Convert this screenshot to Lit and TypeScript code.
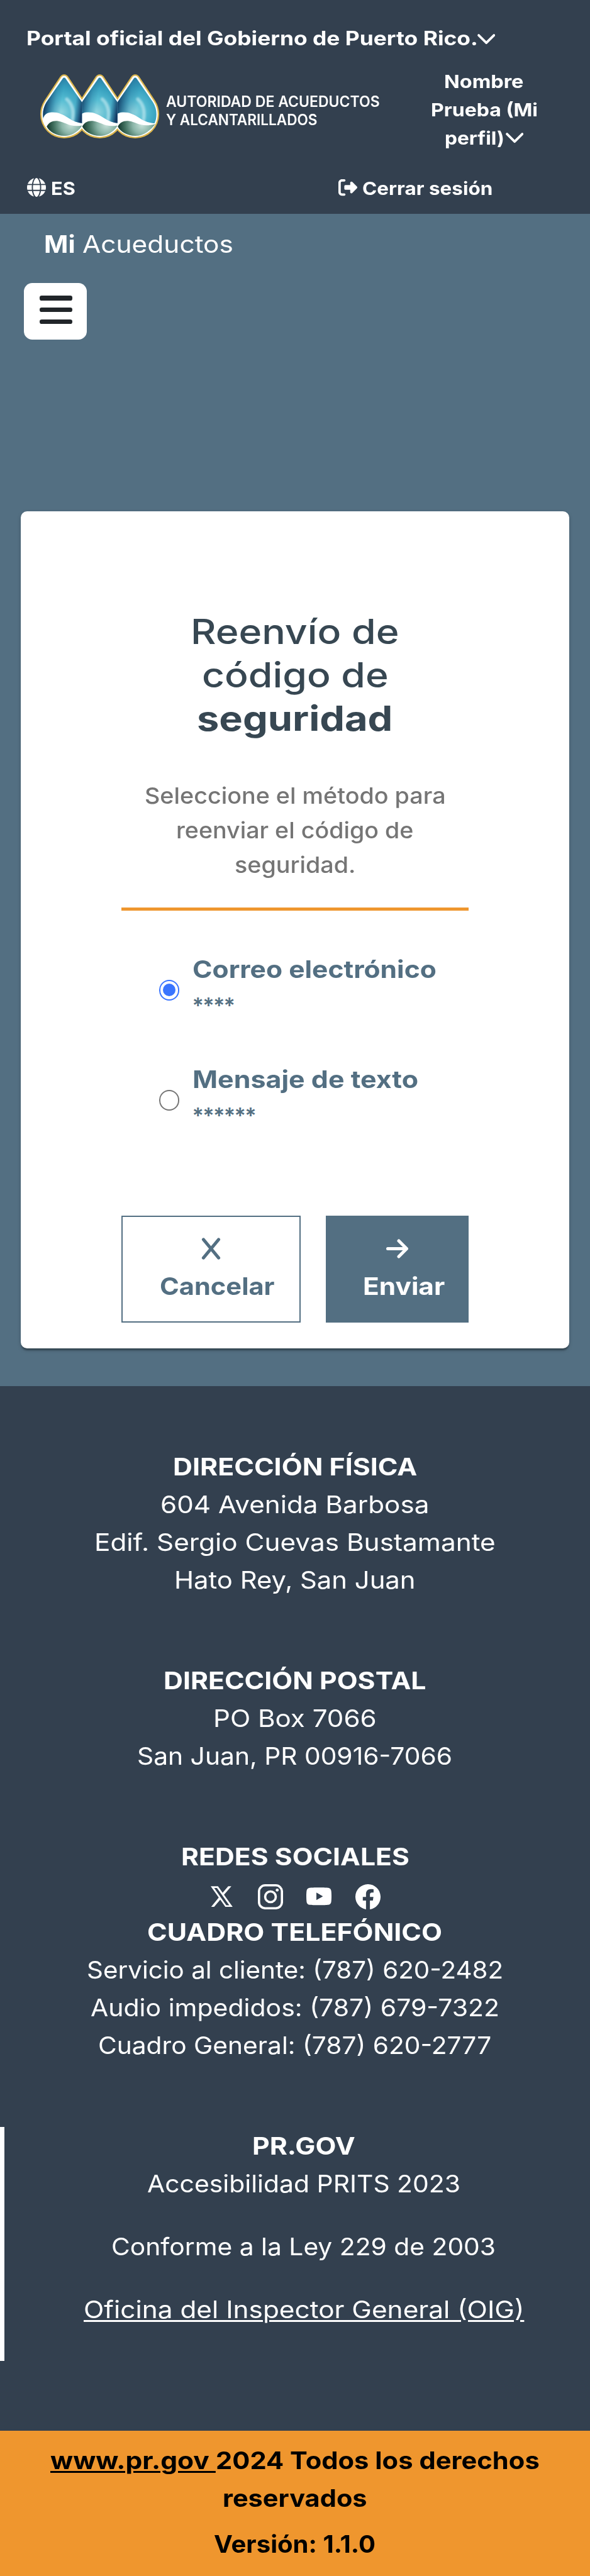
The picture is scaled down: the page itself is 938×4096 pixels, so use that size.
import { LitElement, html, css, svg, unsafeCSS } from "lit";
import { customElement, property } from "lit/decorators.js";

/* Design units are 1/1125 of the page width. */
const UNIT = 938 / 1125;
const u = (n: number) => unsafeCSS((n * UNIT).toFixed(3) + "px");

/* A single line of text, widened so that its ink spans "w" design units. */
@customElement("fit-line")
class FitLine extends LitElement {
  @property() text = "";
  @property({ type: Number }) w = 0;
  @property({ type: Boolean }) track = false;

  static styles = css`
    :host { display: block; white-space: pre; }
    .run { display: inline-block; text-decoration: inherit; transform-origin: 0 50%; }
  `;

  render() {
    return html`<span class="run">${this.text}</span>`;
  }

  updated() {
    const run = this.renderRoot.querySelector(".run") as HTMLElement;
    const cs = getComputedStyle(this);
    const ctx = document.createElement("canvas").getContext("2d")!;
    ctx.font = `${cs.fontWeight} ${cs.fontSize} ${cs.fontFamily}`;
    const m = ctx.measureText(this.text);
    const bearings = m.width - m.actualBoundingBoxRight - m.actualBoundingBoxLeft;
    const natural = run.getBoundingClientRect().width;
    const ink = natural - bearings;
    if (this.track) {
      const gap = (this.w * UNIT - ink) / (this.text.length - 1);
      run.style.letterSpacing = gap.toFixed(3) + "px";
    } else {
      const scale = (this.w * UNIT) / ink;
      run.style.transform = `scaleX(${scale.toFixed(4)})`;
      run.style.marginRight = (natural * (scale - 1)).toFixed(3) + "px";
    }
  }
}

const line = (text: string, w: number, cls = "") =>
  html`<fit-line class=${cls} .text=${text} .w=${w} .track=${cls === "stars"}></fit-line>`;

const DROP =
  "M187 44C196 44 202 50 207 58L294 190C308 212 316 238 316 264C316 338 258 394 187 394C116 394 58 338 58 264C58 238 66 212 80 190L167 58C172 50 178 44 187 44Z";
const DROP_IN =
  "M187 54C190 54 193 57 196 61L288 194C301 215 309 240 309 264C309 334 253 388 187 388C121 388 65 334 65 264C65 240 73 215 86 194L178 61C181 57 184 54 187 54Z";

const dropArt = (i: number) => svg`
  <g transform="translate(${i * 203.5} 0)">
    <g clip-path="url(#cell${i})">
      <g clip-path="url(#inner)">
        <path d="M40 40H330V312C296 322 250 312 212 286C176 262 146 250 112 253C86 255 70 270 66 292L40 300Z" fill="url(#water)"/>
        <path d="M40 40H330V312C296 322 250 312 212 286C176 262 146 250 112 253C86 255 70 270 66 292L40 300Z" fill="url(#${i === 2 ? "edgeLast" : "edge"})"/>
        <path d="M202 178C238 210 244 250 234 300" fill="none" stroke="#d8f1f5" stroke-width="20" stroke-linecap="round" opacity=".55" filter="url(#soft)" clip-path="url(#above)"/>
      </g>
      <path d="M87 335C98 310 124 299 152 303C192 308 222 342 ${i === 2 ? "302 320" : "289 328"}C278 352 240 388 187 388C140 388 100 362 87 335Z" fill="url(#leaf)"/>
    </g>
  </g>`;

const logo = html`
  <svg class="logo" viewBox="50 36 682 367">
    <defs>
      <radialGradient id="water" gradientUnits="userSpaceOnUse" cx="172" cy="252" r="205">
        <stop offset="0" stop-color="#92d6e0"/><stop offset=".35" stop-color="#55bdd3"/>
        <stop offset=".7" stop-color="#359fbe"/><stop offset="1" stop-color="#2c7fa6"/>
      </radialGradient>
      <linearGradient id="edge" gradientUnits="userSpaceOnUse" x1="70" y1="205" x2="290" y2="240">
        <stop offset="0" stop-color="#0f3158"/><stop offset=".3" stop-color="#1b5f8c" stop-opacity=".25"/>
        <stop offset=".45" stop-color="#1b5f8c" stop-opacity="0"/><stop offset=".8" stop-color="#1b4f7c" stop-opacity=".05"/>
        <stop offset="1" stop-color="#10305a" stop-opacity=".95"/>
      </linearGradient>
      <linearGradient id="edgeLast" gradientUnits="userSpaceOnUse" x1="75" y1="205" x2="300" y2="240">
        <stop offset="0" stop-color="#0f3158"/><stop offset=".35" stop-color="#1b5f8c" stop-opacity=".25"/>
        <stop offset=".55" stop-color="#1b5f8c" stop-opacity="0"/>
      </linearGradient>
      <radialGradient id="leaf" gradientUnits="userSpaceOnUse" cx="225" cy="325" r="130">
        <stop offset="0" stop-color="#c6e0d8"/><stop offset=".4" stop-color="#8ab5a8"/>
        <stop offset=".75" stop-color="#41705f"/><stop offset="1" stop-color="#1b4035"/>
      </radialGradient>
      <filter id="soft" x="-50%" y="-50%" width="200%" height="200%"><feGaussianBlur stdDeviation="6"/></filter>
      <clipPath id="inner"><path d=${DROP_IN}/></clipPath>
      <clipPath id="above"><path d="M40 40H330V312C296 322 250 312 212 286C176 262 146 250 112 253L40 300Z"/></clipPath>
      <clipPath id="cell0"><rect x="40" y="30" width="249" height="380"/></clipPath>
      <clipPath id="cell1"><rect x="85" y="30" width="204" height="380"/></clipPath>
      <clipPath id="cell2"><rect x="85" y="30" width="260" height="380"/></clipPath>
    </defs>
    ${[0, 1, 2].map((i) => svg`<path d=${DROP} transform="translate(${i * 203.5} 0)" fill="#dcb64c" stroke="#dcb64c" stroke-width="16"/>`)}
    ${[0, 1, 2].map((i) => svg`<path d=${DROP} transform="translate(${i * 203.5} 0)" fill="#fff"/>`)}
    ${[0, 1, 2].map(dropArt)}
  </svg>`;

const chevron = html`<svg class="chevron" viewBox="0 0 34 20"><path d="M2.5 2.5 17 17 31.5 2.5" fill="none" stroke="currentColor" stroke-width="4.5" stroke-linecap="round" stroke-linejoin="round"/></svg>`;

const globe = html`<svg class="i36" viewBox="0 0 512 512" fill="currentColor"><path d="M352 256c0 22.2-1.2 43.6-3.3 64H163.3c-2.2-20.4-3.3-41.8-3.3-64s1.2-43.6 3.3-64H348.7c2.2 20.4 3.3 41.8 3.3 64zm28.8-64H503.9c5.3 20.5 8.1 41.9 8.1 64s-2.8 43.5-8.1 64H380.8c2.1-20.6 3.2-42 3.2-64s-1.1-43.4-3.2-64zm112.6-32H376.7c-10-63.9-29.8-117.4-55.3-151.6c78.3 20.7 142 77.5 171.9 151.6zm-149.1 0H167.7c6.1-36.4 15.5-68.6 27-94.7c10.5-23.6 22.2-40.7 33.5-51.5C239.4 3.2 248.7 0 256 0s16.6 3.2 27.8 13.8c11.3 10.8 23 27.9 33.5 51.5c11.6 26 20.9 58.2 27 94.7zm-209 0H18.6C48.6 85.9 112.2 29.1 190.6 8.4C165.1 42.6 145.3 96.1 135.3 160zM8.1 192H131.2c-2.1 20.6-3.2 42-3.2 64s1.1 43.4 3.2 64H8.1C2.8 299.5 0 278.1 0 256s2.8-43.5 8.1-64zM194.7 446.6c-11.6-26-20.9-58.2-27-94.6H344.3c-6.1 36.4-15.5 68.6-27 94.6c-10.5 23.6-22.2 40.7-33.5 51.5C272.6 508.8 263.3 512 256 512s-16.6-3.2-27.8-13.8c-11.3-10.8-23-27.9-33.5-51.5zM135.3 352c10 63.9 29.8 117.4 55.3 151.6C112.2 482.9 48.6 426.1 18.6 352H135.3zm358.1 0c-30 74.1-93.6 130.9-171.9 151.6c25.5-34.2 45.2-87.7 55.3-151.6H493.4z"/></svg>`;

const signOut = html`<svg class="i36" viewBox="0 0 512 512" fill="currentColor"><path d="M377.9 105.9L500.7 228.7c7.2 7.2 11.3 17.1 11.3 27.3s-4.1 20.1-11.3 27.3L377.9 406.1c-6.4 6.4-15 9.9-24 9.9c-18.7 0-33.9-15.2-33.9-33.9l0-62.1-128 0c-17.7 0-32-14.3-32-32l0-64c0-17.7 14.3-32 32-32l128 0 0-62.1c0-18.7 15.2-33.9 33.9-33.9c9 0 17.6 3.6 24 9.9zM160 96L96 96c-17.7 0-32 14.3-32 32l0 256c0 17.7 14.3 32 32 32l64 0c17.7 0 32 14.3 32 32s-14.3 32-32 32l-64 0c-53 0-96-43-96-96L0 128C0 75 43 32 96 32l64 0c17.7 0 32 14.3 32 32s-14.3 32-32 32z"/></svg>`;

const social = html`
  <svg class="sx" viewBox="0 0 127 120" fill="currentColor"><path fill-rule="evenodd" d="M0 0H42L127 120H85ZM20 10L90 110H107L36 10Z"/><path d="M101 0H119L75 51L66 41ZM2 120H19L59 73L50 61Z"/></svg>
  <svg class="i48" viewBox="0 0 144 144" fill="none" stroke="currentColor"><rect x="6.5" y="6.5" width="131" height="131" rx="35" stroke-width="13"/><circle cx="72" cy="72" r="30.5" stroke-width="13"/><circle cx="110.5" cy="33.5" r="8.5" fill="currentColor" stroke="none"/></svg>
  <svg class="i48" viewBox="0 0 144 144" fill="currentColor"><path fill-rule="evenodd" d="M72 19C98 19 118 20 126 21C137 23 141 29 142.5 39C144.5 56 144.5 82 142.5 100C141 110 137 116 126 118C108 120.5 36 120.5 18 118C7 116 3 110 1.5 100C-.5 82-.5 56 1.5 39C3 29 7 23 18 21C26 20 46 19 72 19ZM57.5 48V91L95 69.5Z"/></svg>
  <svg class="i48" viewBox="0 0 16 16" fill="currentColor"><path d="M16 8.049c0-4.446-3.582-8.05-8-8.05C3.58 0-.002 3.603-.002 8.05c0 4.017 2.926 7.347 6.75 7.951v-5.625h-2.03V8.05H6.75V6.275c0-2.017 1.195-3.131 3.022-3.131.876 0 1.791.157 1.791.157v1.98h-1.009c-.993 0-1.303.621-1.303 1.258v1.51h2.218l-.354 2.326H9.25V16c3.824-.604 6.75-3.934 6.75-7.951"/></svg>`;

@customElement("app-root")
class AppRoot extends LitElement {
  static styles = css`
    :host {
      display: block; width: ${u(1125)}; height: ${u(4914)}; overflow: hidden;
      font-family: Inter, "Open Sans", sans-serif; color: #fff; background: #536f82;
    }
    * { box-sizing: border-box; }
    svg { display: block; flex: none; }
    .bold { font-weight: 700; }
    header { height: ${u(408)}; background: #33404f; padding-top: ${u(44.4)}; font-weight: 700; }
    .portal { display: flex; align-items: center; height: ${u(57.6)}; line-height: ${u(57.6)}; font-size: ${u(37)}; padding-left: ${u(50.5)}; }
    .portal .chevron { margin: ${u(4)} 0 0 ${u(-1)}; }
    .chevron { width: ${u(34)}; height: ${u(20)}; }
    .brand { display: flex; align-items: flex-start; height: ${u(204)}; padding: ${u(26)} 0 0 ${u(77)}; }
    .logo { width: ${u(227)}; height: ${u(123)}; margin-top: ${u(14)}; }
    .agency { width: ${u(460)}; margin: ${u(48)} 0 0 ${u(13)}; font-size: ${u(28.4)}; line-height: ${u(35)}; font-weight: 600; }
    .user { width: ${u(292)}; font-size: ${u(34.7)}; line-height: ${u(54)}; text-align: center; }
    .profile { display: flex; justify-content: center; align-items: center; gap: ${u(3)}; }
    .tools { display: flex; align-items: center; height: ${u(54)}; margin-top: ${u(26)}; font-size: ${u(34.7)}; line-height: ${u(54)}; padding-left: ${u(51)}; }
    .tool { display: flex; flex: none; align-items: center; gap: ${u(10)}; width: ${u(594)}; }
    .tool:last-child { width: auto; }
    .i36 { width: ${u(36)}; height: ${u(36)}; margin-top: ${u(-3)}; }
    .i48 { width: ${u(48)}; height: ${u(48)}; }
    .sx { width: ${u(42)}; height: ${u(40)}; }
    .main { height: ${u(2235)}; padding: ${u(21)} ${u(39)} 0; }
    .site { display: flex; gap: ${u(13.5)}; height: ${u(72)}; line-height: ${u(72)}; padding-left: ${u(45)}; font-size: ${u(46.3)}; }
    .menu { display: flex; flex-direction: column; gap: ${u(13.4)}; width: ${u(120)}; height: ${u(108)}; margin: ${u(39)} 0 0 ${u(6)}; padding: ${u(24)} 0 0 ${u(30.5)}; border-radius: ${u(16)}; background: #fff; }
    .bar { width: ${u(62.5)}; height: ${u(9)}; border-radius: ${u(4)}; background: #212529; }
    .card {
      height: ${u(1596)}; margin-top: ${u(327)}; padding: ${u(189)} ${u(192)} 0; border-radius: ${u(12)}; background: #fff;
      box-shadow: 0 ${u(6)} ${u(3)} ${u(-3)} rgba(0,0,0,.2), 0 ${u(3)} ${u(3)} rgba(0,0,0,.14), 0 ${u(3)} ${u(9)} rgba(0,0,0,.12);
    }
    .title { color: #374752; text-align: center; font-size: ${u(66)}; line-height: ${u(82.3)}; font-weight: 500; }
    .lead { margin-top: ${u(74)}; color: #757575; text-align: center; font-size: ${u(42.4)}; line-height: ${u(66)}; font-weight: 450; }
    .rule { height: ${u(6)}; margin-top: ${u(48)}; background: #ef962e; }
    .options { display: flex; flex-direction: column; gap: ${u(66)}; padding: ${u(75.5)} 0 0 ${u(72)}; }
    .option { display: flex; align-items: center; gap: ${u(24.5)}; color: #536f82; font-size: ${u(46.3)}; line-height: ${u(72)}; font-weight: 700; }
    .stars { font-size: ${u(41)}; font-weight: 600; margin: ${u(-3)} 0 ${u(3)}; }
    .radio { display: flex; flex: none; width: ${u(39)}; height: ${u(39)}; margin-top: ${u(8)}; border: ${u(3)} solid #757575; border-radius: 50%; align-items: center; justify-content: center; }
    .radio.on { border-color: #3a75ff; }
    .radio.on::after { content: ""; width: ${u(24)}; height: ${u(24)}; border-radius: 50%; background: #3a75ff; }
    .actions { display: flex; justify-content: space-between; margin-top: ${u(152.5)}; font-size: ${u(46.3)}; line-height: ${u(72)}; font-weight: 700; text-align: center; }
    .btn { height: ${u(204)}; padding-top: ${u(24)}; border: ${u(3)} solid #536f82; color: #536f82; }
    .cancel { width: ${u(342)}; }
    .send { width: ${u(273)}; background: #536f82; color: #fff; }
    .glyph { display: flex; height: ${u(72)}; align-items: center; justify-content: center; }
    .glyph svg { width: ${u(42)}; height: ${u(42)}; }
    .btn fit-line { padding-left: ${u(25)}; }
    footer { height: ${u(1992)}; background: #33404f; padding-top: ${u(117.6)}; font-size: ${u(46.3)}; line-height: ${u(72)}; text-align: center; }
    .group { margin-bottom: ${u(119.7)}; }
    .social { display: flex; justify-content: center; align-items: center; gap: ${u(45)}; height: ${u(72)}; padding-top: ${u(10)}; padding-left: ${u(2)}; }
    .sx { margin-right: ${u(3)}; }
    .gov { height: ${u(447)}; border-left: ${u(9)} solid #fff; padding-left: ${u(25)}; }
    .spaced { margin-top: ${u(48)}; }
    .under { text-decoration: underline; text-decoration-thickness: ${u(3.3)}; text-underline-offset: ${u(4)}; }
    .legal { height: ${u(280)}; background: #ef962e; color: #000; padding-top: ${u(21.4)}; font-size: ${u(46.3)}; line-height: ${u(72)}; font-weight: 700; text-align: center; }
    .pair { display: flex; justify-content: center; }
    .version { margin-top: ${u(15.4)}; }
  `;

  render() {
    return html`
      <header>
        <div class="portal">${line("Portal oficial del Gobierno de Puerto Rico.", 855)}${chevron}</div>
        <div class="brand">
          ${logo}
          <div class="agency">${line("AUTORIDAD DE ACUEDUCTOS", 407)}${line("Y ALCANTARILLADOS", 288)}</div>
          <div class="user">
            ${line("Nombre", 150)}${line("Prueba (Mi", 201.5)}
            <div class="profile">${line("perfil)", 110)}${chevron}</div>
          </div>
        </div>
        <div class="tools">
          <div class="tool">${globe}${line("ES", 44)}</div>
          <div class="tool">${signOut}${line("Cerrar sesión", 246)}</div>
        </div>
      </header>
      <div class="main">
        <div class="site">${line("Mi", 55, "bold")}${line("Acueductos", 286)}</div>
        <div class="menu"><div class="bar"></div><div class="bar"></div><div class="bar"></div></div>
        <div class="card">
          <div class="title">${line("Reenvío de", 389)}${line("código de", 350)}${line("seguridad", 367, "bold")}</div>
          <div class="lead">${line("Seleccione el método para", 570)}${line("reenviar el código de", 449)}${line("seguridad.", 226)}</div>
          <div class="rule"></div>
          <div class="options">
            <div class="option"><div class="radio on"></div><div>${line("Correo electrónico", 463)}${line("****", 78, "stars")}</div></div>
            <div class="option"><div class="radio"></div><div>${line("Mensaje de texto", 427)}${line("******", 118.5, "stars")}</div></div>
          </div>
          <div class="actions">
            <div class="btn cancel">
              <div class="glyph"><svg viewBox="0 0 42 42"><path d="M6.5 3.5 35.5 38.5M35.5 3.5 6.5 38.5" fill="none" stroke="currentColor" stroke-width="6" stroke-linecap="round"/></svg></div>
              ${line("Cancelar", 218)}
            </div>
            <div class="btn send">
              <div class="glyph"><svg viewBox="0 0 42 42"><path d="M3 21H38M24 6 39 21 24 36" fill="none" stroke="currentColor" stroke-width="6" stroke-linecap="round" stroke-linejoin="round"/></svg></div>
              ${line("Enviar", 154)}
            </div>
          </div>
        </div>
      </div>
      <footer>
        <div class="group">${line("DIRECCIÓN FÍSICA", 462, "bold")}${line("604 Avenida Barbosa", 506.5)}${line("Edif. Sergio Cuevas Bustamante", 759)}${line("Hato Rey, San Juan", 452.5)}</div>
        <div class="group">${line("DIRECCIÓN POSTAL", 497, "bold")}${line("PO Box 7066", 305)}${line("San Juan, PR 00916-7066", 596)}</div>
        <div class="group">
          ${line("REDES SOCIALES", 431, "bold")}
          <div class="social">${social}</div>
          ${line("CUADRO TELEFÓNICO", 559, "bold")}${line("Servicio al cliente: (787) 620-2482", 788.5)}${line("Audio impedidos: (787) 679-7322", 776.5)}${line("Cuadro General: (787) 620-2777", 745)}
        </div>
        <div class="gov">${line("PR.GOV", 192.5, "bold")}${line("Accesibilidad PRITS 2023", 595)}${line("Conforme a la Ley 229 de 2003", 728, "spaced")}${line("Oficina del Inspector General (OIG)", 832, "spaced under")}</div>
      </footer>
      <div class="legal">
        <div class="pair">${line("www.pr.gov ", 303, "under")}${line("2024 Todos los derechos", 614)}</div>
        ${line("reservados", 272)}
        ${line("Versión: 1.1.0", 307, "version")}
      </div>
    `;
  }
}
